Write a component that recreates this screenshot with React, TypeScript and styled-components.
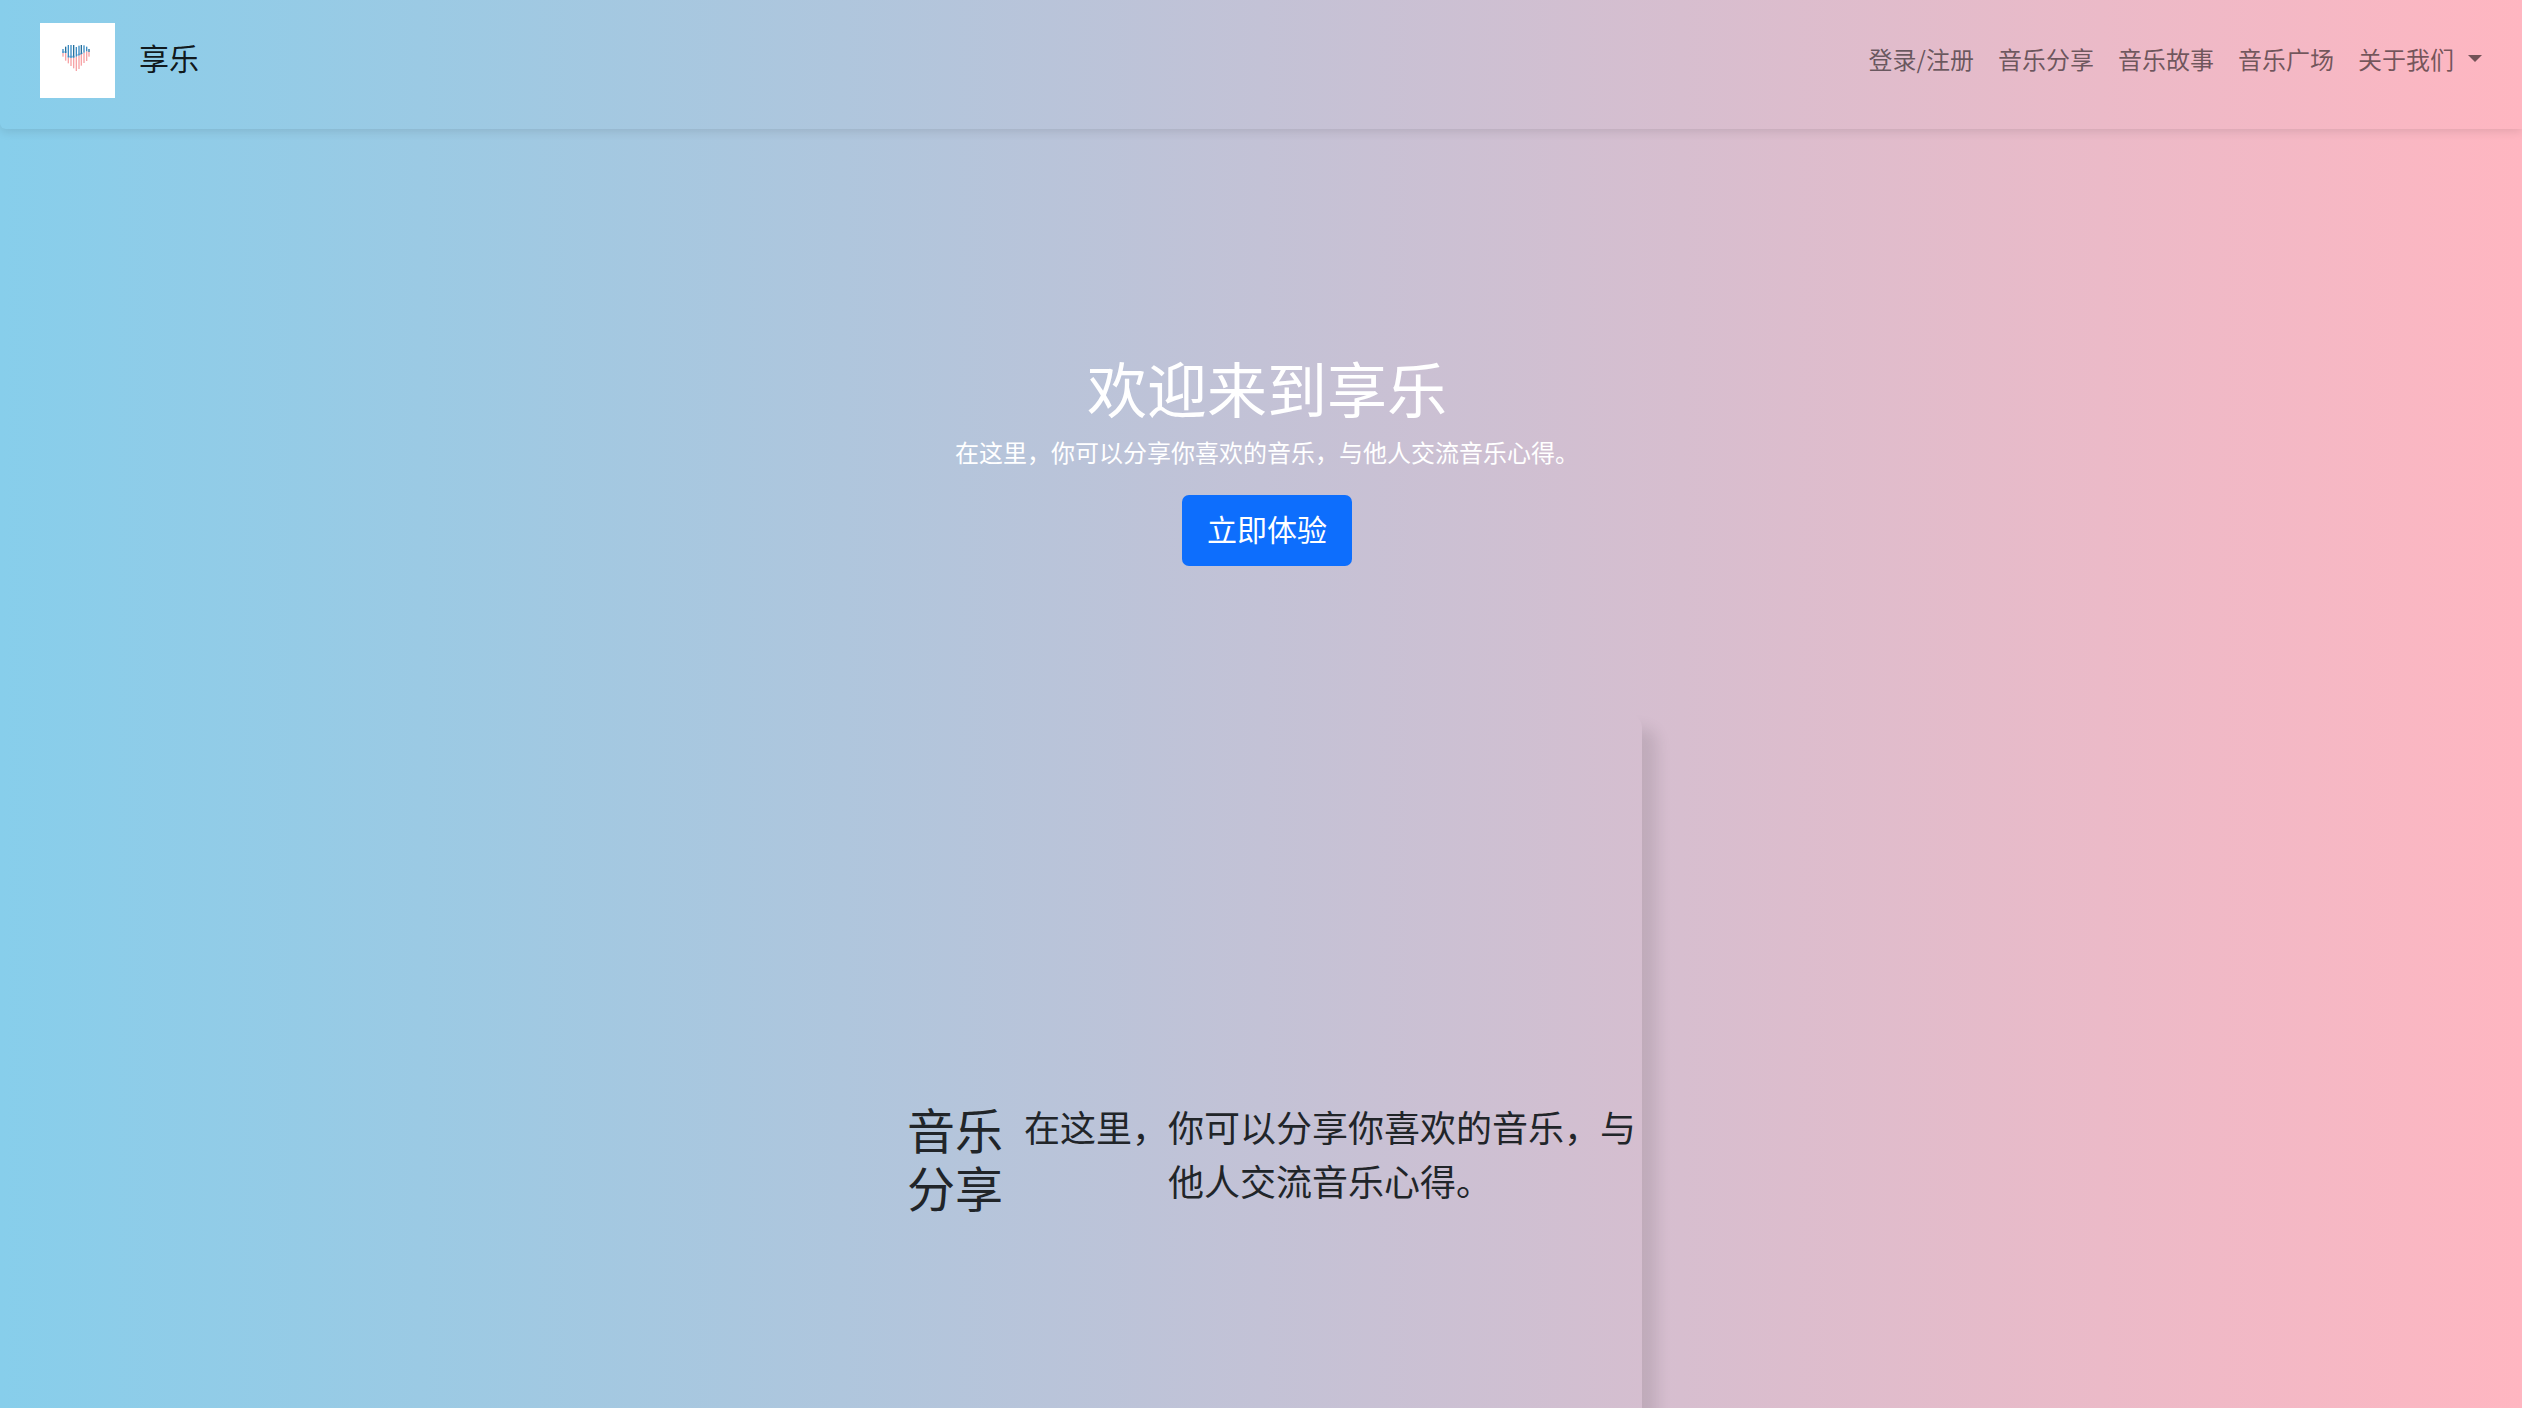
import React from 'react';
import styled, { createGlobalStyle } from 'styled-components';

const GlobalStyle = createGlobalStyle`
  *, *::before, *::after { box-sizing: border-box; }
  body {
    margin: 0;
    color: #212529;
    font-family: 'Noto Sans CJK SC', 'Noto Sans', sans-serif;
    font-size: 24px;
    line-height: 36px;
  }
  h1, h2, p, ul { margin: 0; padding: 0; }
`;

const Page = styled.div`
  display: flex;
  flex-direction: column;
  height: 100vh;
  overflow: hidden;
  background: linear-gradient(to right, #87ceeb, #ffb6c1);
`;

const Navbar = styled.header`
  display: flex;
  justify-content: space-between;
  align-items: center;
  flex: none;
  padding: 23px 40px 31px;
  border-radius: 0 0 0 6px;
  box-shadow: 0 3px 10px rgba(0, 0, 0, 0.1);
`;

const Brand = styled.a`
  display: flex;
  align-items: center;
  gap: 24px;
  color: rgba(0, 0, 0, 0.9);
  font-size: 30px;
  text-decoration: none;
`;

const BrandName = styled.span`
  padding-bottom: 8px;
`;

const Logo = styled.svg`
  display: block;
  width: 75px;
  height: 75px;
  background: #fff;
`;

const Menu = styled.ul`
  display: flex;
  gap: 24px;
  padding-bottom: 4px;
  list-style: none;
`;

const MenuLink = styled.a`
  color: rgba(0, 0, 0, 0.55);
  text-decoration: none;
`;

const MenuToggle = styled.button`
  display: flex;
  align-items: center;
  gap: 14px;
  padding: 0;
  border: 0;
  background: none;
  color: rgba(0, 0, 0, 0.55);
  font: inherit;
  cursor: pointer;

  &::after {
    content: '';
    border: 7px solid transparent;
    border-top-color: currentColor;
    border-bottom: 0;
  }
`;

const Main = styled.main`
  display: flex;
  flex-direction: column;
  align-items: center;
  gap: 147px;
  flex: 1;
  min-height: 0;
  padding: 222px 0 0 12px;
`;

const Hero = styled.section`
  display: flex;
  flex-direction: column;
  align-items: center;
  color: #fff;
`;

const HeroTitle = styled.h1`
  margin-bottom: 11px;
  font-size: 60px;
  font-weight: 400;
  line-height: 72px;
`;

const HeroText = styled.p`
  margin-bottom: 25px;
`;

const HeroButton = styled.button`
  padding: 11px 25px 15px;
  border: 0;
  border-radius: 7px;
  background: #0d6efd;
  color: #fff;
  font: inherit;
  font-size: 30px;
  line-height: 45px;
  cursor: pointer;
`;

const Card = styled.section`
  display: flex;
  align-items: flex-start;
  gap: 21px;
  flex: none;
  width: 750px;
  height: 885px;
  padding: 386px 6px 0 15px;
  border-radius: 15px;
  box-shadow: 15px 15px 15px rgba(0, 0, 0, 0.1);
`;

const CardTitle = styled.h2`
  flex: none;
  width: 96px;
  font-size: 48px;
  font-weight: 400;
  line-height: 58px;
`;

const CardText = styled.p`
  flex: 1;
  font-size: 36px;
  line-height: 54px;
  text-align: center;
`;

/* Equaliser bars that form the heart: x, top, colour split, bottom. */
const bars = [
  [37, 57, 69, 80],
  [45, 50, 69, 92],
  [53, 45, 82, 100],
  [61, 45, 84, 108],
  [69, 45, 83, 115],
  [77, 51, 80, 123],
  [85, 47, 76, 117],
  [92, 45, 72, 107],
  [100, 46, 68, 99],
  [108, 50, 64, 93],
  [115, 57, 66, 80],
];

function HeartLogo() {
  return (
    <Logo viewBox="-30 -21 225 225" aria-hidden="true">
      {bars.map(([x, top, split, bottom], i) => (
        <g key={x}>
          <rect x={x} y={split} width="4" height={bottom - split} fill="#f7a3a6" />
          <rect x={x} y={top} width="4" height={split - top} fill={i % 3 === 1 ? '#256f9c' : '#3b8cc4'} />
        </g>
      ))}
      <path d="M37 66H50M53 80H74M82 76L98 69" stroke="#3b8cc4" strokeWidth="5" strokeOpacity="0.55" fill="none" />
    </Logo>
  );
}

const links = ['登录/注册', '音乐分享', '音乐故事', '音乐广场'];
const intro = '在这里，你可以分享你喜欢的音乐，与他人交流音乐心得。';

export default function App() {
  return (
    <Page lang="zh-CN">
      <GlobalStyle />
      <Navbar>
        <Brand href="#">
          <HeartLogo />
          <BrandName>享乐</BrandName>
        </Brand>
        <nav>
          <Menu>
            {links.map((label) => (
              <li key={label}>
                <MenuLink href="#">{label}</MenuLink>
              </li>
            ))}
            <li>
              <MenuToggle type="button" aria-haspopup="menu">关于我们</MenuToggle>
            </li>
          </Menu>
        </nav>
      </Navbar>
      <Main>
        <Hero>
          <HeroTitle>欢迎来到享乐</HeroTitle>
          <HeroText>{intro}</HeroText>
          <HeroButton type="button">立即体验</HeroButton>
        </Hero>
        <Card>
          <CardTitle>音乐分享</CardTitle>
          <CardText>{intro}</CardText>
        </Card>
      </Main>
    </Page>
  );
}
